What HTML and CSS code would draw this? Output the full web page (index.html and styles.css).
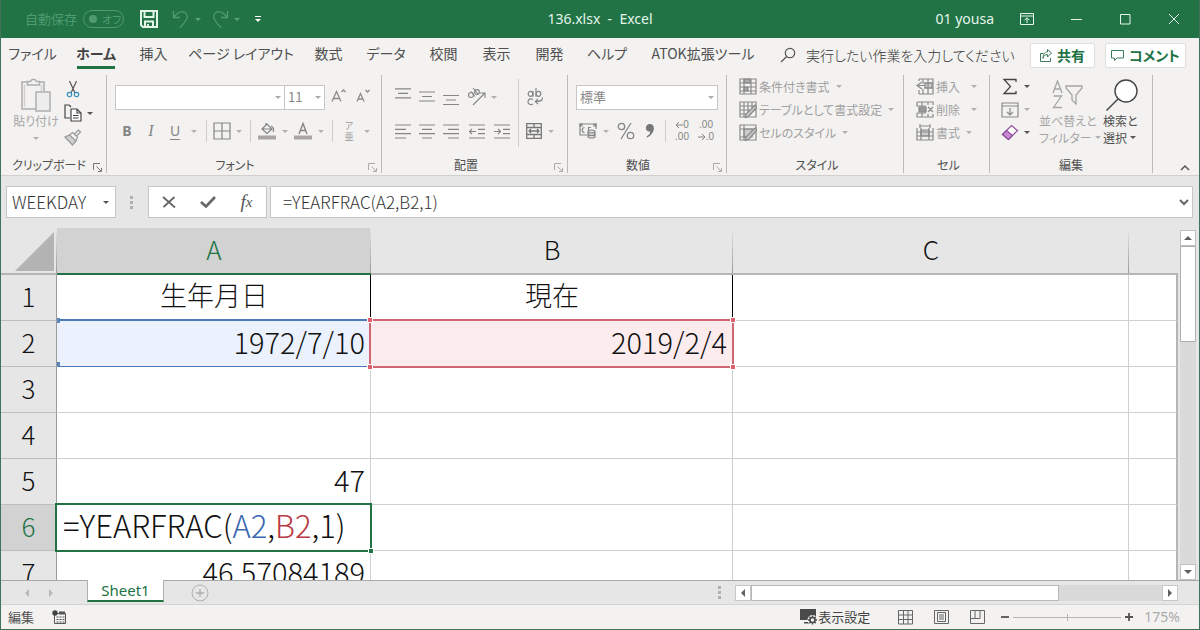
FILE: index.html
```html
<!DOCTYPE html>
<html lang="ja">
<head>
<meta charset="utf-8">
<title>136.xlsx - Excel</title>
<link rel="stylesheet" href="styles.css">
</head>
<body>
<div class="window">
  <header class="titlebar">
    <div class="quick">
      <label class="autosave"><span>自動保存</span><button class="toggle" disabled><i class="knob"></i>オフ</button></label>
      <button class="qbtn save" aria-label="上書き保存"><svg width="20" height="20" viewBox="0 0 20 20" fill="none" stroke="#e4f5ea" stroke-width="2"><path d="M2 2h16v16H4l-2-2zM5.500 2v6h9V2M6 18v-5.500h8V18M9 15v3"/></svg></button>
      <button class="qbtn undo" aria-label="元に戻す" disabled><svg width="18" height="20" viewBox="0 0 18 20" fill="none" stroke="#4f9a70" stroke-width="1.300"><path d="M1.500 2v6.500H8M1.500 8.500C6 3 10 1.500 13 3.500c4 3 3 7-5 15"/></svg></button>
      <i class="caret faint"></i>
      <button class="qbtn redo" aria-label="やり直し" disabled><svg width="18" height="20" viewBox="0 0 18 20" fill="none" stroke="#4f9a70" stroke-width="1.300"><path d="M16.500 2v6.500H10M16.500 8.500C12 3 8 1.500 5 3.500c-4 3-3 7 5 15"/></svg></button>
      <i class="caret faint"></i>
      <button class="qbtn custom" aria-label="カスタマイズ"><svg width="8" height="8" viewBox="0 0 8 8"><path d="M1 1.500h6" stroke="#fff"/><path d="M1 4h6L4 7z" fill="#fff"/></svg></button>
    </div>
    <h1 class="doc-title">136.xlsx&nbsp; -&nbsp; Excel</h1>
    <div class="sys">
      <span class="user">01 yousa</span>
      <button aria-label="リボンの表示オプション"><svg width="14" height="12" viewBox="0 0 14 12" fill="none" stroke="#e4f5ea"><path d="M.5.500h13v11H.500zM.5 3h13M7 10V5M4.500 7.300L7 4.800l2.500 2.500"/></svg></button>
      <button aria-label="最小化"><svg width="12" height="12" viewBox="0 0 12 12" stroke="#e4f5ea"><path d="M1 6.500h11"/></svg></button>
      <button aria-label="最大化"><svg width="12" height="12" viewBox="0 0 12 12" fill="none" stroke="#e4f5ea"><path d="M1.500 1.500h9.500v9.500H1.500z"/></svg></button>
      <button aria-label="閉じる"><svg width="12" height="12" viewBox="0 0 12 12" stroke="#e4f5ea"><path d="M1 1l10 10M11 1L1 11"/></svg></button>
    </div>
  </header>

  <nav class="tabs">
    <a href="#" class="t-kana4">ファイル</a>
    <a href="#" class="t-kana3 active">ホーム</a>
    <a href="#" class="t-kanji">挿入</a>
    <a href="#" class="t-layout">ページ レイアウト</a>
    <a href="#" class="t-kanji">数式</a>
    <a href="#" class="t-kana3">データ</a>
    <a href="#" class="t-kanji">校閲</a>
    <a href="#" class="t-kanji">表示</a>
    <a href="#" class="t-kanji">開発</a>
    <a href="#" class="t-kana3">ヘルプ</a>
    <a href="#" class="t-atok">ATOK拡張ツール</a>
    <label class="tell"><svg width="16" height="16" viewBox="0 0 16 16" fill="none" stroke="#555" stroke-width="1.200"><circle cx="10" cy="6" r="4.700"/><path d="M6.700 9.500L1 15"/></svg><input type="text" value="実行したい作業を入力してください" aria-label="操作アシスト"></label>
    <div class="actions">
      <button class="act share"><svg width="12" height="13" viewBox="0 0 12 13" fill="none" stroke="#3b7d58"><path d="M3.500 4.500h-3v8h10V9M3 9.500c.5-3 2.500-4 4.500-4V8l4-4-4-3.500V3C4.500 3 3 5.500 3 9.500z"/></svg>共有</button>
      <button class="act comment"><svg width="13" height="13" viewBox="0 0 13 13" fill="none" stroke="#3b7d58"><path d="M.5 1.500h12v7.500H6L3.500 11.500V9h-3z"/></svg>コメント</button>
    </div>
  </nav>

  <div class="ribbon">
    <section class="group g-clip">
      <div class="body">
        <button class="big paste" disabled><svg width="32" height="34" viewBox="0 0 32 34" fill="none" stroke="#aeaeae" stroke-width="1.500"><path d="M16 31H2V4h6M19 4h5v9"/><path d="M4.500 28.500V6.500M21.500 7v6" stroke="#d0d0d0"/><path d="M7.500 7V3.500h3c1-3 5-3 6 0h3V7z" fill="#f3f2f1"/><path d="M16 14h14v19H16z" fill="#ededed"/></svg><span>貼り付け</span><i class="caret light"></i></button>
        <div class="stack">
          <div><button class="ico" aria-label="切り取り"><svg width="14" height="18" viewBox="0 0 14 18" fill="none" stroke="#555" stroke-width="1.200"><path d="M3.500 1l5.500 12M10.500 1L5 13"/><circle cx="3.500" cy="14.500" r="2.200" stroke="#3a90bd"/><circle cx="10.500" cy="14.500" r="2.200" stroke="#3a90bd"/></svg></button></div>
          <div><button class="ico" aria-label="コピー"><svg width="18" height="18" viewBox="0 0 18 18" fill="none" stroke="#444" stroke-width="1.200"><path d="M6 14H1V1h4l2 2"/><path d="M7 5h6l4 4v8H7z" fill="#fff"/><path d="M13 5v4h4M9 11.500h5.500M9 14h5.500"/></svg></button><i class="caret dark"></i></div>
          <div><button class="ico" aria-label="書式のコピー" disabled><svg width="18" height="17" viewBox="0 0 18 17" fill="none" stroke="#999" stroke-width="1.200"><path d="M1 8l7.500 8 3.500-4-6.500-6z" fill="#d0d0d0"/><path d="M5.500 6l3-2.500L13.500 8 12 12M10.500 5l4-4 2 2-4 4"/></svg></button></div>
        </div>
      </div>
      <footer><span>クリップボード</span><svg class="launch" width="9" height="9" viewBox="0 0 9 9" fill="none" stroke="#777"><path d="M.5 7V.5H7M3.500 3.500L8 8M8.500 5v3.500H5"/></svg></footer>
    </section>

    <section class="group launchable g-font">
      <div class="body rows">
        <div class="row">
          <span class="combo w-font"><select disabled aria-label="フォント名"><option></option></select></span><span class="combo w-size"><select disabled aria-label="フォント サイズ"><option>11</option></select></span>
          <button class="ico w28" disabled aria-label="拡大"><svg width="16" height="18" viewBox="0 0 16 18" fill="none" stroke="#8a8a8a" stroke-width="1.300"><path d="M1 13.500L5.500 3.500 10 13.500M2.500 10.500h6M10.500 4l2-2 2 2"/></svg></button>
          <button class="ico w20" disabled aria-label="縮小"><svg width="16" height="18" viewBox="0 0 16 18" fill="none" stroke="#8a8a8a" stroke-width="1.300"><path d="M2 13.500L5.500 5.500 9 13.500M3.200 11h4.600M10.500 2l2 2 2-2"/></svg></button>
        </div>
        <div class="row">
          <button class="ico w24 fmt bold" disabled>B</button><button class="ico w24 fmt ital" disabled>I</button><button class="ico w24 fmt undl" disabled>U</button><i class="caret light w14"></i><i class="sep"></i>
          <button class="ico w22" disabled aria-label="罫線"><svg width="18" height="18" viewBox="0 0 18 18" fill="none" stroke="#858585" stroke-width="1.200"><path d="M1 1h16v16H1zM9 1v16M1 9h16"/></svg></button><i class="caret light w12"></i><i class="sep"></i>
          <button class="ico w24" disabled aria-label="塗りつぶし"><svg width="18" height="18" viewBox="0 0 18 18" fill="none" stroke="#858585" stroke-width="1.200"><path d="M4 7l5-5 5 5-5 4.500zM4 7h9M8 4V1M13 4c3 1 3 4 2 6"/><path d="M0 15.500h18" stroke="#aaa5a2" stroke-width="4"/></svg></button><i class="caret light w12"></i>
          <button class="ico w24" disabled aria-label="フォントの色"><svg width="18" height="18" viewBox="0 0 18 18" fill="none" stroke="#858585" stroke-width="1.400"><path d="M5 12L9 1.500 13 12M6.300 8.500h5.400"/><path d="M0 15.500h18" stroke="#aaa5a2" stroke-width="4"/></svg></button><i class="caret light w12"></i><i class="sep"></i>
          <button class="ico w24 ruby" disabled><span>ア</span><span>亜</span></button><i class="caret light w12"></i>
        </div>
      </div>
      <footer><span>フォント</span><svg class="launch" width="9" height="9" viewBox="0 0 9 9" fill="none" stroke="#aaa"><path d="M.5 7V.5H7M3.500 3.500L8 8M8.500 5v3.500H5"/></svg></footer>
    </section>

    <section class="group launchable g-align">
      <div class="body">
        <div class="rows">
          <div class="row">
            <button class="ico w24" disabled aria-label="上揃え"><svg width="16" height="18" viewBox="0 0 16 18" stroke="#858585" stroke-width="1.200"><path d="M0 0.800h16M3 5.300h10M0 9.800h16"/></svg></button>
            <button class="ico w24" disabled aria-label="上下中央揃え"><svg width="16" height="16" viewBox="0 0 16 16" stroke="#858585" stroke-width="1.200"><path d="M0 3h16M3 7.500h10M0 12h16"/></svg></button>
            <button class="ico w24" disabled aria-label="下揃え"><svg width="16" height="18" viewBox="0 0 16 18" stroke="#858585" stroke-width="1.200"><path d="M0 7.500h16M3 12h10M0 16.500h16"/></svg></button>
            <button class="ico w28" disabled aria-label="方向"><svg width="20" height="20" viewBox="0 0 20 20" fill="none" stroke="#858585" stroke-width="1.100"><circle cx="4" cy="8" r="2.500"/><path d="M4 4.500l4 5M6 1l5 6M6 18L18 6M13 6h5v5"/><circle cx="10" cy="5" r="2.400"/></svg></button><i class="caret light"></i>
          </div>
          <div class="row">
            <button class="ico w24" disabled aria-label="左揃え"><svg width="16" height="15" viewBox="0 0 16 15" stroke="#858585" stroke-width="1.200"><path d="M0 1h16M0 5.300h11M0 9.600h16M0 14h11"/></svg></button>
            <button class="ico w24" disabled aria-label="中央揃え"><svg width="16" height="15" viewBox="0 0 16 15" stroke="#858585" stroke-width="1.200"><path d="M0 1h16M3 5.300h10M0 9.600h16M3 14h10"/></svg></button>
            <button class="ico w24" disabled aria-label="右揃え"><svg width="16" height="15" viewBox="0 0 16 15" stroke="#858585" stroke-width="1.200"><path d="M0 1h16M5 5.300h11M0 9.600h16M5 14h11"/></svg></button>
            <button class="ico w28" disabled aria-label="インデントを減らす"><svg width="16" height="15" viewBox="0 0 16 15" fill="none" stroke="#858585" stroke-width="1.200"><path d="M0 1h16M9 5.300h7M9 9.600h7M0 14h16M0 7.500h7M3 4.800L.5 7.500 3 10.200"/></svg></button>
            <button class="ico w22" disabled aria-label="インデントを増やす"><svg width="16" height="15" viewBox="0 0 16 15" fill="none" stroke="#858585" stroke-width="1.200"><path d="M0 1h16M9 5.300h7M9 9.600h7M0 14h16M0 7.500h7M4 4.800l2.500 2.700L4 10.200"/></svg></button>
          </div>
        </div>
        <i class="sep tall"></i>
        <div class="rows">
          <div class="row"><button class="ico w24" disabled aria-label="折り返して全体を表示する"><svg width="18" height="18" viewBox="0 0 18 18" fill="none" stroke="#858585" stroke-width="1.200"><ellipse cx="4.500" cy="5.800" rx="2.300" ry="2.500"/><path d="M7 3v5.800M10 0v8.800M7 11.500c-2.500-1.500-5-.3-5 2.200s2.500 3.700 5 2.200M16.500 9.500c0 3-1.500 4-7 4M12 10.800L9.300 13.500l2.700 2.700"/><ellipse cx="12.500" cy="5.800" rx="2.300" ry="2.500"/></svg></button></div>
          <div class="row"><button class="ico w22" disabled aria-label="セルを結合して中央揃え"><svg width="16" height="16" viewBox="0 0 16 16" fill="none" stroke="#777" stroke-width="1.300"><path d="M.7.700h14.600v14.600H.700zM.7 4.500h14.600M.7 11.500h14.600M8 .7v3.800M8 11.500v3.800M3 8h10M5 6L3 8l2 2M11 6l2 2-2 2"/></svg></button><i class="caret light w12"></i></div>
        </div>
      </div>
      <footer><span>配置</span><svg class="launch" width="9" height="9" viewBox="0 0 9 9" fill="none" stroke="#aaa"><path d="M.5 7V.5H7M3.500 3.500L8 8M8.500 5v3.500H5"/></svg></footer>
    </section>

    <section class="group launchable g-num">
      <div class="body rows">
        <div class="row"><span class="combo w-num"><select disabled aria-label="表示形式"><option>標準</option></select></span></div>
        <div class="row">
          <button class="ico w24" disabled aria-label="通貨"><svg width="18" height="16" viewBox="0 0 18 16" fill="none" stroke="#858585" stroke-width="1.200"><path d="M8 12H1V1h16v5M5.500 4.500c-3 0-3 5 0 5M9.500 8V4.500H12"/><path d="M1 1h2v2H1zM15 1h2v2h-2z"/><path d="M9 8.500v5c0 2 7 2 7 0v-5c0-2-7-2-7 0c0 2 7 2 7 0M9 11c0 2 7 2 7 0" fill="#ddd"/></svg></button><i class="caret light w12"></i>
          <button class="ico w28" disabled aria-label="パーセント"><svg width="18" height="18" viewBox="0 0 18 18" fill="none" stroke="#858585" stroke-width="1.300"><circle cx="4.500" cy="4.500" r="3.200"/><circle cx="13.500" cy="13.500" r="3.200"/><path d="M14 1L4 17"/></svg></button>
          <button class="ico w20" disabled aria-label="桁区切り"><svg width="10" height="14" viewBox="0 0 10 14"><path d="M5 0c6 0 5 10-3 13.500L1.500 12.500C5 10.500 5.500 8.500 5 7.500-.5 8-.5 0 5 0z" fill="#777"/></svg></button><i class="sep"></i>
          <button class="ico w24 dec" disabled><span><svg width="8" height="8" viewBox="0 0 8 8" fill="none" stroke="#858585"><path d="M8 4H1M4 1L1 4l3 3"/></svg>0</span><span>.00</span></button>
          <button class="ico w24 dec" disabled><span>.00</span><span><svg width="8" height="8" viewBox="0 0 8 8" fill="none" stroke="#858585"><path d="M0 4h7M4 1l3 3-3 3"/></svg>.0</span></button>
        </div>
      </div>
      <footer><span>数値</span><svg class="launch" width="9" height="9" viewBox="0 0 9 9" fill="none" stroke="#aaa"><path d="M.5 7V.5H7M3.500 3.500L8 8M8.500 5v3.500H5"/></svg></footer>
    </section>

    <section class="group g-style">
      <div class="body list">
        <button class="item" disabled><svg width="18" height="17" viewBox="0 0 18 17" fill="none" stroke="#8a8a8a" stroke-width="1.200"><path d="M5 1h6v4H5zM5 9h4v4H5z" fill="#aaa"/><path d="M1 1h16v15H1zM1 5h16M1 9h16M1 13h16M5 1v15M12 1v15"/></svg>条件付き書式<i class="caret light"></i></button>
        <button class="item" disabled><svg width="18" height="17" viewBox="0 0 18 17" fill="none" stroke="#8a8a8a" stroke-width="1.200"><path d="M1 1h16v15H1zM1 5h16M1 9h16M1 13h9M5 1v15M9 1v10M13 1v6"/><path d="M16 4l2 2-8 9-4 2 1-4z" fill="#c4c4c4"/></svg>テーブルとして書式設定<i class="caret light"></i></button>
        <button class="item" disabled><svg width="18" height="17" viewBox="0 0 18 17" fill="none" stroke="#8a8a8a" stroke-width="1.200"><path d="M5 5h8v8H5z" fill="#ccc"/><path d="M1 1h16v15H1zM1 5h16M1 13h9M5 1v15"/><path d="M16 4l2 2-8 9-4 2 1-4z" fill="#c4c4c4"/></svg>セルのスタイル<i class="caret light"></i></button>
      </div>
      <footer><span>スタイル</span></footer>
    </section>

    <section class="group g-cell">
      <div class="body list">
        <button class="item spread" disabled><svg width="18" height="17" viewBox="0 0 18 17" fill="none" stroke="#8a8a8a" stroke-width="1.200"><path d="M9 5h7v5H9z" fill="#ccc"/><path d="M3 1h14v15H3M3 1v2M3 12v4M6 5h11M8 10h9M7 1v3M12 1v15M7 11v5M6 4L1 7.500 6 11M1 7.500h8"/></svg>挿入<i class="caret light"></i></button>
        <button class="item spread" disabled><svg width="18" height="17" viewBox="0 0 18 17" fill="none" stroke="#8a8a8a" stroke-width="1.200"><path d="M3 6h7v5H3z" fill="#999"/><path d="M1 1h16v3M1 1v4h9M1 12h9M1 12v4h16v-3M6 1v4M12 1v3M6 12v4M12 13v3M12 6l5 5M17 6l-5 5"/></svg>削除<i class="caret light"></i></button>
        <button class="item" disabled><svg width="18" height="17" viewBox="0 0 18 17" fill="none" stroke="#8a8a8a" stroke-width="1.200"><path d="M5 6h8v6H5z" fill="#ccc"/><path d="M1 4v12h16V4M1 8h16M1 12h16M5 4v12M13 4v12M4 2h10M4 0v4M14 0v4"/></svg>書式<i class="caret light"></i></button>
      </div>
      <footer><span>セル</span></footer>
    </section>

    <section class="group g-edit">
      <div class="body">
        <div class="stack">
          <div><button class="ico" aria-label="オート SUM"><svg width="16" height="17" viewBox="0 0 16 17" fill="none" stroke="#444" stroke-width="1.300"><path d="M14 4V1.500H2l6.500 7L2 15.500h12V13"/></svg></button><i class="caret dark"></i></div>
          <div><button class="ico" aria-label="フィル" disabled><svg width="18" height="16" viewBox="0 0 18 16" fill="none" stroke="#8a8a8a" stroke-width="1.200"><path d="M1 1h16v14H1zM1 4h16M9 6v7M6 10l3 3 3-3"/></svg></button><i class="caret light"></i></div>
          <div><button class="ico" aria-label="クリア"><svg width="18" height="17" viewBox="0 0 18 17" stroke="#8d4a9a" stroke-width="1.200"><path d="M1.500 10.500L10.500 1.500l6 5-9 9z" fill="#fff"/><path d="M1.500 10.500L5.500 6.500l6 5-4 4z" fill="#c98bd2"/></svg></button><i class="caret dark"></i></div>
        </div>
        <button class="big sort" disabled><svg width="32" height="32" viewBox="0 0 32 32" fill="none" stroke="#a5a5a5" stroke-width="1.300"><path d="M1 13L5.500 1 10 13M2.500 9h6M1.500 16h8L1.500 27.500h8.500M14 6h16v2l-6 7v9l-4-4v-5l-6-7z"/></svg><span>並べ替えと</span><span>フィルター<i class="caret light"></i></span></button>
        <button class="big find"><svg width="34" height="34" viewBox="0 0 34 34" fill="none" stroke="#444" stroke-width="1.400"><circle cx="21" cy="13" r="11" fill="#fff"/><path d="M13 21L1.500 32.500"/></svg><span>検索と</span><span>選択<i class="caret dark"></i></span></button>
      </div>
      <footer><span>編集</span></footer>
    </section>
    <button class="collapse" aria-label="リボンを折りたたむ"><svg width="10" height="7" viewBox="0 0 10 7" fill="none" stroke="#555" stroke-width="1.500"><path d="M1 6l4-4 4 4"/></svg></button>
  </div>

  <div class="formula-bar">
    <div class="name"><input type="text" value="WEEKDAY" aria-label="名前ボックス"><i class="caret dark"></i></div>
    <i class="dots"></i>
    <div class="fx">
      <button aria-label="キャンセル"><svg width="14" height="12" viewBox="0 0 14 12" stroke="#666" stroke-width="1.800"><path d="M1 1l12 10.500M12.500 1L1.500 11"/></svg></button>
      <button aria-label="入力"><svg width="16" height="12" viewBox="0 0 16 12" fill="none" stroke="#666" stroke-width="2.600"><path d="M1 6l5 4.500L15 1"/></svg></button>
      <button class="fxi" aria-label="関数の挿入">f<small>x</small></button>
    </div>
    <div class="formula"><input type="text" value="=YEARFRAC(A2,B2,1)" aria-label="数式バー"><svg width="10" height="7" viewBox="0 0 10 7" fill="none" stroke="#666" stroke-width="2"><path d="M1 1l4 4 4-4"/></svg></div>
  </div>

  <main class="sheet">
    <div class="grid">
      <table>
        <colgroup><col class="c-head"><col class="c-a"><col class="c-b"><col class="c-c"><col></colgroup>
        <thead><tr><th class="corner"></th><th class="sel">A</th><th>B</th><th>C</th><th></th></tr></thead>
        <tbody>
          <tr><th>1</th><td class="mid black">生年月日</td><td class="mid black">現在</td><td></td><td></td></tr>
          <tr><th>2</th><td class="range blue">1972/7/10<i></i></td><td class="range red">2019/2/4<i></i><i></i><i></i><i></i></td><td></td><td></td></tr>
          <tr><th>3</th><td></td><td></td><td></td><td></td></tr>
          <tr><th>4</th><td></td><td></td><td></td><td></td></tr>
          <tr><th>5</th><td>47</td><td></td><td></td><td></td></tr>
          <tr><th class="sel">6</th><td class="edit">=YEARFRAC(<span class="ra">A2</span>,<span class="rb">B2</span>,1)<i></i></td><td></td><td></td><td></td></tr>
          <tr><th>7</th><td>46.57084189</td><td></td><td></td><td></td></tr>
        </tbody>
      </table>
    </div>
    <div class="vscroll">
      <button aria-label="上へ"><i class="up"></i></button>
      <div class="vtrack"><div class="vthumb"></div></div>
      <button aria-label="下へ"><i class="down"></i></button>
    </div>
  </main>

  <div class="sheet-tabs">
    <div class="arrows"><button aria-label="前のシート"><i class="left"></i></button><button aria-label="次のシート"><i class="right"></i></button></div>
    <button class="sheet-tab">Sheet1</button>
    <button class="add" aria-label="新しいシート"><svg width="18" height="18" viewBox="0 0 18 18" fill="none" stroke="#b0b0b0"><circle cx="9" cy="9" r="8"/><path d="M9 5v8M5 9h8" stroke-width="1.400"/></svg></button>
    <i class="dots"></i>
    <div class="hscroll">
      <button aria-label="左へ"><i class="left"></i></button>
      <div class="htrack"><div class="hthumb"></div></div>
      <button aria-label="右へ"><i class="right"></i></button>
    </div>
  </div>

  <footer class="status">
    <span>編集</span>
    <button class="macro" aria-label="マクロの記録"><svg width="14" height="14" viewBox="0 0 14 14" fill="none" stroke="#555"><path d="M2.500 3.500h11v10h-11z"/><path d="M7 3h6" stroke-width="3"/><path d="M4.500 7h2M7.500 7h2M10.500 7h2M4.500 9.500h2M7.500 9.500h2M10.500 9.500h2M4.500 12h2M7.500 12h2M10.500 12h2"/><circle cx="3" cy="3" r="2.700" fill="#444" stroke="none"/></svg></button>
    <button class="disp"><svg width="18" height="16" viewBox="0 0 18 16"><path d="M0 0h16v11H0zM4 13h6v1.500H4z" fill="#4a4a4a"/><circle cx="12.500" cy="11" r="5" fill="#f3f2f1"/><circle cx="12.500" cy="11" r="2.500" fill="none" stroke="#4a4a4a" stroke-width="1.500"/><path d="M12.500 6.500v2M12.500 13.500v2M8 11h2M15 11h2M9.300 7.800l1.400 1.400M14.300 12.800l1.400 1.400M15.700 7.800l-1.400 1.400M10.700 12.800l-1.400 1.400" stroke="#4a4a4a" stroke-width="1.500"/></svg>表示設定</button>
    <button class="view" aria-label="標準"><svg width="15" height="15" viewBox="0 0 15 15" fill="none" stroke="#666"><path d="M.5.500h14v13.500H.500zM5.500.5v13.500M10 .5v13.500M.5 5h14M.5 9.500h14"/></svg></button>
    <button class="view" aria-label="ページ レイアウト"><svg width="15" height="14" viewBox="0 0 15 14" fill="none" stroke="#666"><path d="M.5.500h14v13H.500zM3.500 2.500h8v9h-8zM5 5h5M5 7h5M5 9h5"/></svg></button>
    <button class="view" aria-label="改ページ プレビュー"><svg width="15" height="14" viewBox="0 0 15 14" fill="none" stroke="#666"><path d="M.5.500h14v13H.500zM.5 8.500h9.500V.5M5 .5v8"/></svg></button>
    <div class="zoom"><button aria-label="縮小"><svg width="10" height="10" viewBox="0 0 10 10" stroke="#555" stroke-width="1.800"><path d="M1 5h8"/></svg></button><input type="range" min="10" max="400" value="175" aria-label="ズーム" disabled><button aria-label="拡大"><svg width="10" height="10" viewBox="0 0 10 10" stroke="#555" stroke-width="1.800"><path d="M1 5h8M5 1v8"/></svg></button></div>
    <span class="pct">175%</span>
  </footer>
</div>
</body>
</html>
```
FILE: styles.css
```css
* { box-sizing: border-box; }
html, body { margin: 0; height: 100%; }
body {
  font: 14px/20px "Noto Sans CJK JP", sans-serif;
  font-feature-settings: "palt";
  color: #505050;
}
button, input, select { font: inherit; font-feature-settings: inherit; color: inherit; background: none; border: 0; padding: 0; margin: 0; border-radius: 0; }
button { display: flex; align-items: center; justify-content: center; flex: none; }
svg { display: block; flex: none; }
i { display: block; flex: none; font-style: normal; }

.window { display: flex; flex-direction: column; height: 100vh; border: 1px solid #42735a; border-top: 0; overflow: hidden; background: #e6e6e6; }

/* carets */
.caret { display: flex; align-items: center; justify-content: center; width: 6px; height: 6px; }
.caret::before { content: ""; border: 3px solid transparent; border-bottom: 0; border-top-color: currentColor; }
.caret.light { color: #b0b0b0; }
.caret.dark { color: #555; }
.caret.faint { color: #5ba27a; width: 8px; }
.caret.w12 { width: 12px; }
.caret.w14 { width: 14px; }

/* title bar */
.titlebar { display: grid; grid-template-columns: 1fr auto 1fr; align-items: center; height: 38px; flex: none; background: #217346; color: #e4f5ea; }
.quick { display: flex; align-items: center; padding-left: 24px; }
.autosave { display: flex; align-items: center; gap: 6px; font-size: 13px; color: #4f9a70; }
.toggle { width: 41px; height: 18px; border: 1px solid #4f9a70; border-radius: 9px; font-size: 11px; line-height: 16px; justify-content: flex-start; padding-left: 5px; gap: 5px; color: #4f9a70; white-space: nowrap; }
.knob { width: 8px; height: 8px; border-radius: 50%; background: #4f9a70; }
.save { margin-left: 15px; }
.undo { margin: 0 4px 0 13px; }
.redo { margin: 0 4px 0 9px; }
.custom { margin-left: 13px; }
.doc-title, .user { margin: 0; font: 14px/20px "Noto Sans", sans-serif; }
.sys { display: flex; align-items: center; justify-content: flex-end; padding-right: 1px; }
.sys button { width: 49px; height: 38px; }
.sys .user { margin-right: 8px; }

/* ribbon tabs */
.tabs { display: flex; align-items: center; height: 34px; flex: none; gap: 24px; padding: 0 13px 0 11px; background: #f3f2f1; }
.tabs a { display: flex; justify-content: center; flex: none; color: #505050; text-decoration: none; white-space: nowrap; line-height: 24px; height: 28px; border-bottom: 3px solid transparent; }
.tabs .active { font-weight: 700; color: #444; border-color: #217346; }
.t-kana4 { width: 41px; }
.t-kana3 { width: 38px; }
.t-kanji { width: 29px; }
.t-layout { width: 98px; }
.t-atok { width: 106px; }
.tell { display: flex; align-items: center; flex: 1; gap: 10px; min-width: 0; margin-right: -18px; }
.tell input { flex: 1; min-width: 0; width: 100%; height: 24px; font-weight: 300; color: #333; }
.actions { display: flex; gap: 10px; }
.act { height: 25px; gap: 5px; padding: 0 8px; background: #fff; border: 1px solid #e1dfdd; border-radius: 2px; font-weight: 700; color: #217346; white-space: nowrap; }
.share { width: 65px; }
.comment { width: 81px; }

/* ribbon */
.ribbon { display: flex; flex: none; height: 104px; padding-top: 3px; background: #f3f2f1; border-bottom: 1px solid #d2d0ce; }
.group { position: relative; display: flex; flex-direction: column; flex: none; border-right: 1px solid #bcbab8; margin-bottom: 2px; padding: 0 8px; font-size: 12px; }
.body { display: flex; flex: 1; min-height: 0; }
.group footer { display: flex; align-items: center; justify-content: center; height: 16px; line-height: 16px; }
.launchable footer { padding-right: 18px; }
.launch { position: absolute; right: 4px; bottom: 1px; }
.g-clip { width: 106px; }
.g-clip footer { justify-content: flex-start; padding-left: 3px; }
.g-font { width: 275px; }
.g-align { width: 186px; padding-left: 9px; }
.g-num { width: 159px; }
.g-style { width: 177px; padding-left: 12px; }
.g-cell { width: 86px; padding-left: 12px; }
.g-edit { width: 163px; }
.big { display: flex; flex-direction: column; justify-content: flex-start; line-height: 17px; }
.big span { display: flex; align-items: center; gap: 3px; white-space: nowrap; }
.paste { width: 54px; padding-top: 3px; color: #a6a6a6; }
.paste .caret { margin-top: 6px; }
.stack { display: flex; flex: none; flex-direction: column; padding: 2px 0 0; }
.stack div { display: flex; align-items: center; height: 24px; gap: 4px; }
.stack .ico { width: 20px; height: 23px; }
.rows { display: flex; flex-direction: column; padding-top: 5px; }
.row { display: flex; align-items: center; height: 34px; }
.ico { flex: none; }
.w20 { width: 20px; }
.w22 { width: 22px; }
.w24 { width: 24px; }
.w28 { width: 28px; }
.sep { width: 10px; height: 22px; background: linear-gradient(#cfcdcb, #cfcdcb) center / 1px 100% no-repeat; }
.sep.tall { height: 68px; margin-top: 4px; }
.combo { position: relative; display: block; flex: none; height: 25px; font-size: 13px; }
.combo select { appearance: none; width: 100%; height: 25px; padding: 0 3px; background: #fff; border: 1px solid #c8c6c4; color: #888; opacity: 1; }
.combo::after { content: ""; position: absolute; right: 4px; top: 11px; border: 3px solid transparent; border-bottom: 0; border-top-color: #aaa; }
.w-font { width: 170px; }
.w-size { width: 41px; margin-left: -1px; }
.w-num { width: 142px; }
.fmt { font: 700 14px/20px "Noto Sans", sans-serif; color: #858585; }
.ital { font: italic 16px/20px "Liberation Serif", serif; }
.undl { font-weight: 400; text-decoration: underline; text-underline-offset: 3px; }
.ruby { flex-direction: column; color: #999; font-size: 9px; line-height: 11px; }
.dec { flex-direction: column; color: #858585; font: 10px/12px "Liberation Sans", sans-serif; }
.dec span { display: flex; align-items: center; }
.list { flex-direction: column; }
.item { justify-content: flex-start; height: 23px; gap: 2px; color: #a0a0a0; white-space: nowrap; }
.item .caret { margin-left: 4px; }
.spread .caret { margin-left: 9px; }
.g-edit .stack { width: 38px; padding: 0 0 0 2px; }
.g-edit .stack div { height: 23px; }
.sort { width: 64px; padding-top: 5px; color: #a6a6a6; }
.find { width: 44px; padding-top: 3px; }
.sort span, .find span { align-self: flex-start; }
.sort span { margin-left: 3px; }
.find span { margin-left: 3px; }
.collapse { margin: auto 9px 4px auto; }

/* formula bar */
.formula-bar { display: flex; flex: none; align-items: center; height: 52px; padding: 0 6px 0 5px; font-size: 17px; font-weight: 300; font-feature-settings: normal; color: #333; }
.name, .fx, .formula { display: flex; align-items: center; height: 32px; background: #fff; border: 1px solid #c6c6c6; }
.name { width: 110px; padding: 0 6px 0 5px; }
.name input { flex: 1; min-width: 0; }
.dots { width: 3px; height: 13px; margin: 0 15px 0 14px; background: repeating-linear-gradient(#b0b0b0 0 3px, transparent 3px 5px); }
.fx { width: 119px; justify-content: space-around; }
.fx button { width: 39px; height: 30px; }
.fx .fxi { font: italic 19px/20px "Liberation Serif", serif; color: #555; }
.fxi small { font-size: 15px; }
.formula { flex: 1; min-width: 0; margin-left: 3px; padding: 0 3px 0 12px; }
.formula input { flex: 1; min-width: 0; }

/* sheet */
.sheet { display: flex; flex: 1; min-height: 0; }
.grid { flex: 1; min-width: 0; overflow: hidden; }
table { width: 100%; table-layout: fixed; border-collapse: separate; border-spacing: 0; font-size: 29px; font-weight: 300; font-feature-settings: normal; line-height: 40px; color: #111; }
.c-head { width: 56px; }
.c-a { width: 314px; }
.c-b { width: 362px; }
.c-c { width: 396px; }
th { font-weight: 300; font-size: 26px; padding: 0 0 4px; border-right: 1px solid #9b9b9b; border-bottom: 1px solid #bdbdbd; background: #e6e6e6; }
thead th { height: 47px; border-bottom: 2px solid #b5b5b5; border-right: 0; background: linear-gradient(#e6e6e6, #9a9a9a) right / 1px 100% no-repeat #e6e6e6; }
thead th:last-child { background: #e6e6e6; }
th.sel { color: #217346; background-color: #d2d2d2; }
thead .sel { border-bottom-color: #217346; }
.corner { padding: 0; }
.corner::before { content: ""; display: block; margin: 4px 3px 2px auto; width: 39px; height: 39px; background: #b3b3b3; clip-path: polygon(100% 0, 100% 100%, 0 100%); }
td { position: relative; height: 46px; padding: 0 5px 5px 6px; text-align: right; white-space: nowrap; background: #fff; border-right: 1px solid #d0d0d0; border-bottom: 1px solid #d0d0d0; }
td:last-child { border-right: 2px solid #b5b5b5; }
.mid { text-align: center; font-size: 27px; }
.black { border-right-color: #000; }
.range::after, .edit::after { content: ""; position: absolute; inset: -2px; border: 2px solid; }
.blue { background: #ecf2fd; }
.blue::after { border-color: #4a7ab8; border-width: 2px 0; right: 0; left: 0; }
.red { background: #fdecee; z-index: 1; }
.red::after { border-color: #cf6672; }
.range i, .edit i { position: absolute; z-index: 2; width: 6px; height: 6px; background: #e0606e; border: 1px solid #fff; }
.red i { left: -4px; top: -4px; }
.red i:nth-child(2) { left: auto; right: -4px; }
.red i:nth-child(3) { top: auto; bottom: -4px; }
.red i:nth-child(4) { top: auto; left: auto; right: -4px; bottom: -4px; }
.blue i { left: 0; top: -3px; width: 3px; height: 49px; border: 0; background: linear-gradient(#5b86bd 5px, transparent 5px 44px, #5b86bd 44px); }
.edit { text-align: left; z-index: 1; font-size: 31px; }
.edit::after { border-color: #217346; }
.edit i { right: -4px; bottom: -4px; background: #217346; }
.ra { color: #3d68b2; }
.rb { color: #b83a44; }

.vscroll { display: flex; flex-direction: column; width: 21px; flex: none; padding: 2px 3px 0 2px; }
.vscroll button { width: 16px; height: 16px; background: #fff; border: 1px solid #c0c0c0; }
.vtrack { flex: 1; background: #dadada; }
.vthumb { height: 96px; background: #fff; border: 1px solid #b0b0b0; }
.up, .down, .left, .right { border: 4px solid transparent; }
.up { border-top: 0; border-bottom-color: #606060; }
.down { border-bottom: 0; border-top-color: #606060; }
.left { border-left: 0; border-right-color: #606060; }
.right { border-right: 0; border-left-color: #606060; }

/* sheet tabs */
.sheet-tabs { display: flex; flex: none; align-items: center; height: 25px; border-top: 1px solid #a8a8a8; border-bottom: 1px solid #d4d4d4; }
.arrows { display: flex; gap: 8px; padding-left: 18px; width: 86px; }
.arrows button { width: 16px; height: 16px; }
.arrows .left { border-right-color: #b8b8b8; }
.arrows .right { border-left-color: #b8b8b8; }
.sheet-tab { align-self: flex-start; width: 77px; height: 22px; margin-top: -1px; background: #fff; border: 1px solid #b0b0b0; border-top: 0; border-bottom: 2px solid #217346; color: #217346; font: 15px/20px "Noto Sans", sans-serif; }
.add { margin: 0 auto 0 27px; }
.sheet-tabs .dots { margin: 0 14px 0 0; }
.hscroll { display: flex; width: 37%; height: 16px; margin-right: 21px; }
.hscroll button { width: 16px; height: 16px; background: #fff; border: 1px solid #c8c8c8; }
.htrack { flex: 1; background: #dadada; }
.hthumb { width: 75%; height: 16px; background: #fff; border: 1px solid #b8b8b8; }

/* status bar */
.status { display: flex; flex: none; align-items: center; height: 24px; padding: 0 19px 0 7px; background: #f3f2f1; font-size: 13px; line-height: 20px; }
.macro { margin: 0 auto 0 18px; }
.disp { gap: 0; margin-right: 28px; color: #444; }
.view { width: 15px; margin-right: 21px; }
.zoom { display: flex; align-items: center; margin: 0 10px 0 -6px; }
.zoom input { appearance: none; width: 108px; height: 12px; margin: 0 3px; background: linear-gradient(#b5b5b5, #b5b5b5) center / 100% 1px no-repeat, linear-gradient(#b5b5b5, #b5b5b5) center / 1px 7px no-repeat; }
.zoom input::-webkit-slider-thumb { appearance: none; width: 0; height: 0; }
.pct { color: #aaa; font: 14px/20px "Noto Sans", sans-serif; }
```
